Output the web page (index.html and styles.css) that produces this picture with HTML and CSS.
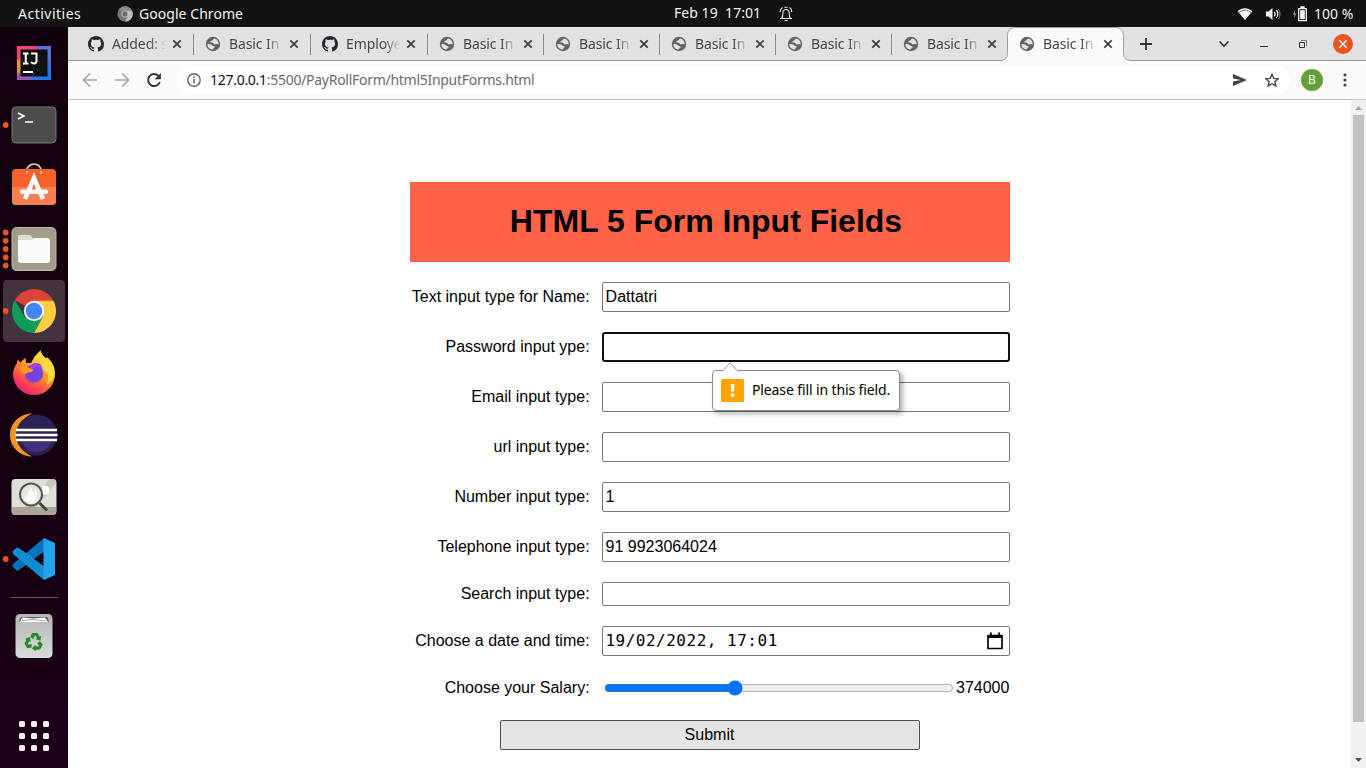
FILE: index.html
```html
<!DOCTYPE html>
<html lang="en">
<head>
<meta charset="utf-8">
<title>Basic Input Forms</title>
<link rel="stylesheet" href="styles.css">
</head>
<body>
<svg class="defs" aria-hidden="true">
  <defs>
    <symbol id="globe" viewBox="0 0 16 16">
      <circle cx="8" cy="8" r="7.2" fill="#5f6368"/>
      <path d="M9.500 2.400c-2 .4-1.300 1.400-2.300 2-1 .5-2 .5-1.800 1.500.2.900 1.600.5 2.600.8 1 .4.600 1.500 1.700 1.700 1.100.1 1.300-.5 2.200-.4.900.1.900.6 1.800.5C13.900 5.800 12.200 3.100 9.500 2.400zM2.300 8.300c1.500-.4 3-.2 4.200.4.900.5.700 1.200 1.600 1.300 1 .1 1.600.4 1.500 1.300-.2 1-1.500.9-1.900 2.300C4.500 13.500 2.500 11.200 2.300 8.300z" fill="#e1e1e1"/>
    </symbol>
    <symbol id="github" viewBox="0 0 16 16">
      <path fill="#24292f" d="M8 0C3.580 0 0 3.580 0 8c0 3.540 2.290 6.530 5.470 7.590.4.070.55-.17.55-.38 0-.19-.01-.82-.01-1.490-2.010.37-2.530-.49-2.690-.94-.09-.23-.48-.94-.82-1.130-.28-.15-.68-.52-.01-.53.630-.01 1.080.58 1.230.82.720 1.210 1.870.87 2.330.66.070-.52.280-.87.510-1.070-1.780-.2-3.640-.89-3.640-3.950 0-.87.310-1.590.820-2.150-.08-.2-.36-1.020.08-2.120 0 0 .67-.21 2.200.820.640-.18 1.320-.27 2-.27s1.360.09 2 .27c1.530-1.040 2.200-.82 2.200-.82.440 1.100.160 1.920.080 2.120.510.560.820 1.270.820 2.150 0 3.070-1.870 3.750-3.650 3.950.290.250.540.730.540 1.480 0 1.070-.01 1.930-.01 2.200 0 .21.150.46.550.38A8.010 8.010 0 0 0 16 8c0-4.420-3.580-8-8-8z"/>
    </symbol>
    <symbol id="close" viewBox="0 0 10 10"><path d="M1.300 1.300l7.400 7.400M8.700 1.300L1.300 8.700" stroke="#3c4043" stroke-width="1.800" fill="none"/></symbol>
  </defs>
</svg>

<header class="topbar">
  <span class="activities">Activities</span>
  <svg class="topchrome" width="16" height="16" viewBox="0 0 16 16"><circle cx="8" cy="8" r="7.600" fill="#777"/><path d="M8 4.500h7A7.600 7.600 0 0 1 8 15.600l3-5.600z" fill="#bdbdbd"/><path d="M1.500 4A7.600 7.600 0 0 1 15 4.500H8z" fill="#8b8b8b"/><circle cx="8" cy="8" r="3.500" fill="#ccc"/><circle cx="8" cy="8" r="2.700" fill="#6d6d6d"/></svg>
  <span class="appname">Google Chrome</span>
  <span class="clock">Feb 19&nbsp; 17:01</span>
  <svg class="bell" width="14" height="16" viewBox="0 0 14 16" fill="none" stroke="#eee" stroke-width="1.100"><path d="M1 12.500h12M2.500 12.500c1-1 1.300-2.500 1.300-5 0-2.600 1.200-4 3.200-4s3.200 1.400 3.200 4c0 2.500.3 4 1.300 5M5.500 14.500h3M5.500 1.200h3M3.500 1.500C2 2.300 1.200 3.800 1.200 6M10.500 1.500c1.500.8 2.300 2.300 2.300 4.500"/></svg>
  <svg class="wifi" width="16" height="14" viewBox="0 0 16 14"><path d="M.6 4.200C4.800.1 11.200.1 15.400 4.200L8 13z" fill="#f4f4f4"/><path d="M1.800 5.600c3.600-3.200 8.800-3.200 12.400 0" stroke="#777" stroke-width="1" fill="none"/></svg>
  <svg class="volume" width="16" height="14" viewBox="0 0 16 14"><path d="M1 4.500h2.500L7.500 1v12L3.500 9.500H1z" fill="#f4f4f4"/><path d="M9.200 4.800c1 1.200 1 3.200 0 4.400M11.300 3c2 2.200 2 5.800 0 8" stroke="#e8e8e8" fill="none" stroke-width="1.300"/><path d="M13.300 2c2.200 2.800 2.200 7.200 0 10" stroke="#888" fill="none"/></svg>
  <svg class="battery" width="15" height="16" viewBox="0 0 15 16"><path d="M3.200 4L.8 8.500h1.700L2 12l2.400-4.500H2.800z" fill="#999"/><path d="M6.700 2.700h7.600v12H6.700zM9 1h3v1.500H9z" fill="none" stroke="#f4f4f4" stroke-width="1.300"/><path d="M8.200 4.200h4.600v9H8.200z" fill="#f4f4f4"/></svg>
  <span class="percent">100 %</span>
</header>

<div class="desktop">
<nav class="dock">
  <svg viewBox="0 0 68 62"><defs><linearGradient id="ij" x1="0" y1="0" x2="1" y2="1"><stop offset="0" stop-color="#ff4078"/><stop offset=".35" stop-color="#f2407e"/><stop offset=".55" stop-color="#5b68cf"/><stop offset="1" stop-color="#087cfa"/></linearGradient></defs><path d="M17 14h34v34H17z" fill="url(#ij)"/><path d="M17 27l4 2v12l-4 3z" fill="#e49436"/><path d="M17 42l7-5 8 11H17z" fill="#9659b7"/><path d="M35 14h16v15l-6-4z" fill="#6171d2"/><path d="M20.500 17.500h27v27h-27z" fill="#111"/><path d="M23 21.500h5.500M25.750 21.500v10M23 31.500h5.500M31 21.500h5.500v7.300q0 2.700-2.500 2.700-1.800 0-3-1.500" fill="none" stroke="#fff" stroke-width="2"/><path d="M23 39h10v2H23z" fill="#fff"/></svg>

  <svg viewBox="0 0 68 62"><circle cx="5.700" cy="31" r="2.900" fill="#e95420"/><rect x="12" y="13" width="44" height="36" rx="4" fill="#4c4c4c" stroke="#777"/><path d="M18 19l6 3-6 3M25 28h8" fill="none" stroke="#fff" stroke-width="1.500"/></svg>

  <svg viewBox="0 0 68 62"><path d="M27 17.500v-3a7 6.500 0 0 1 14 0v3" fill="none" stroke="#f3d3b0" stroke-width="1.600"/><rect x="12" y="13" width="44" height="36" rx="4" fill="#f4622b"/><path d="M12 31h44v14a4 4 0 0 1-4 4H16a4 4 0 0 1-4-4z" fill="#f77f50"/><path d="M27 17.500v-2.500M41 17.500v-2.500" stroke="#f3d3b0" stroke-width="1.600"/><path d="M25 43l9-21 9 21" fill="none" stroke="#fff" stroke-width="4.500"/><rect x="20" y="33.500" width="28" height="4.500" rx="2" fill="#fff"/></svg>

  <svg viewBox="0 0 68 62"><g fill="#e95420"><circle cx="5.700" cy="14.500" r="2.900"/><circle cx="5.700" cy="22.800" r="2.900"/><circle cx="5.700" cy="31" r="2.900"/><circle cx="5.700" cy="39.300" r="2.900"/><circle cx="5.700" cy="47.600" r="2.900"/></g><rect x="12" y="9.500" width="44" height="43" rx="4.500" fill="#a29c8a" stroke="#bcb7a8"/><path d="M18 19q0-2 2-2h9q2 0 3 2l2 3H18z" fill="#dfddd2"/><path d="M18 22h12q3 0 4-2h13q3 0 3 3v19q0 3-3 3H21q-3 0-3-3z" fill="#faf9f8"/></svg>

  <svg viewBox="0 0 68 62"><rect x="3" width="62" height="62" rx="4" fill="#42333f"/><circle cx="5.700" cy="31" r="2.900" fill="#e95420"/><path d="M34 31L14.950 20A22 22 0 0 1 53.050 20z" fill="#db4437"/><path d="M34 20.800h19.500A22 22 0 0 1 34 53l9-17z" fill="#ffcd40"/><path d="M14.950 20A22 22 0 0 0 34 53l9-16.500L24.470 36.500z" fill="#0f9d58"/><circle cx="34" cy="31" r="10.200" fill="#f1f1f1"/><circle cx="34" cy="31" r="8.200" fill="#4285f4"/></svg>

  <svg viewBox="0 0 68 62"><defs><linearGradient id="ff" x1=".8" y1="0" x2=".2" y2="1"><stop offset=".1" stop-color="#fff44f"/><stop offset=".45" stop-color="#ff9422"/><stop offset=".75" stop-color="#ff4350"/><stop offset="1" stop-color="#e31587"/></linearGradient></defs><path d="M34 15.500l6.500-7q1 5 6 8l1-1c5 5 7.500 10 7.500 17a21 20.500 0 0 1-42 0c0-5 2-9 4-11l.5-4 3 3q2-3 5-4.500l.5 5 5 0z" fill="url(#ff)"/><circle cx="34" cy="31.500" r="9.300" fill="#7542e5"/><path d="M29 25q3-4 8-4 6 1 6.500 8-3-4-7-5-2 4-7.500 1z" fill="#a644e6"/><path d="M19 25q6-2 10 1l4.500 1.500q-.5 3-5.500 3-3 2.500-6 .5z" fill="#ff9a22"/><path d="M34 15.500l6.500-7q1 5 6 8l1-1c5 5 7.500 10 7 17-2 7-6 9-8 10 4-9 1-13-4-15-1-7-4-10-8.500-12z" fill="#ffd83d"/></svg>

  <svg viewBox="0 0 68 62"><path d="M32 9.500C20 9.500 10 19 10 31s10 21.500 22 21.500C12 43 12 19 32 9.500z" fill="#f7941e"/><circle cx="36.500" cy="31" r="20.500" fill="#2c2255"/><path d="M22 38h29q-4 10-15 10-10 0-14-10z" fill="#42307d"/><path d="M16 26h41M15.500 31h42M16 36h41" stroke="#fff" stroke-width="2.400"/></svg>

  <svg viewBox="0 0 68 62"><rect x="11.500" y="13" width="45" height="36" rx="4" fill="#dedfd7"/><path d="M12 41h44v4q0 4-4 4H16q-4 0-4-4z" fill="#aaa797"/><path d="M50 13h2q4 0 4 4L36 41H25z" fill="#c5c5b8"/><circle cx="45" cy="24" r="4.500" fill="#fff"/><circle cx="31" cy="28.500" r="11" fill="#e9e9e4" fill-opacity=".85" stroke="#555" stroke-width="2"/><path d="M24 34l7-12 3 6 3-3v9l-6 4z" fill="#fafafa"/><path d="M39.500 37l7.500 7.500" stroke="#444" stroke-width="3"/></svg>

  <svg viewBox="0 0 68 62"><circle cx="5.700" cy="31" r="2.900" fill="#e95420"/><path d="M44 10l1 13-26 19q-2 1-3 0l-3-3q-1-2 0-3z" fill="#0873b9"/><path d="M13 23l3-3q2-1 3 0l26 19-1 13-31-26q-1-2 0-3z" fill="#128bd1"/><path d="M44 10l11 5v32l-11 5q-1-1-.5-2V12z" fill="#24a3ed"/></svg>

  <hr class="dock-line">

  <svg viewBox="0 0 68 62"><defs><linearGradient id="bin" x1="0" y1="0" x2="0" y2="1"><stop offset="0" stop-color="#b5b5b5"/><stop offset="1" stop-color="#dadada"/></linearGradient></defs><rect x="15.500" y="9" width="37" height="44" rx="4.500" fill="url(#bin)"/><path d="M19 17l1.500-5h27l1.500 5z" fill="#666"/><path d="M20 17l2-4.500 11 1 12-1 3 4.500z" fill="#fff"/><path d="M22 15.500l12-1 12 1.500" fill="none" stroke="#aaa"/><g fill="#278a27" transform="translate(0 -1)"><path id="arrow" d="M30.300 33.200L32 29h5.500l2.200 3.500 1.500-.7-.8 5-4.900-1.500 1.500-1-2-3-1.700 3.600z"/><use href="#arrow" transform="rotate(120 34 38)"/><use href="#arrow" transform="rotate(240 34 38)"/></g></svg>

  <svg class="apps" viewBox="0 0 68 62"><g fill="#f2f2f2"><rect x="19" y="16" width="6" height="6" rx="1.500"/><rect x="31" y="16" width="6" height="6" rx="1.500"/><rect x="43" y="16" width="6" height="6" rx="1.500"/><rect x="19" y="28" width="6" height="6" rx="1.500"/><rect x="31" y="28" width="6" height="6" rx="1.500"/><rect x="43" y="28" width="6" height="6" rx="1.500"/><rect x="19" y="40" width="6" height="6" rx="1.500"/><rect x="31" y="40" width="6" height="6" rx="1.500"/><rect x="43" y="40" width="6" height="6" rx="1.500"/></g></svg>
</nav>

<main class="browser">
  <div class="tabstrip">
    <div class="tab wide"><svg class="fav"><use href="#github"/></svg><span class="tabname">Added: s</span><svg class="x"><use href="#close"/></svg></div>
    <div class="tab wide"><svg class="fav"><use href="#globe"/></svg><span class="tabname">Basic In</span><svg class="x"><use href="#close"/></svg></div>
    <div class="tab wide"><svg class="fav"><use href="#github"/></svg><span class="tabname">Employe</span><svg class="x"><use href="#close"/></svg></div>
    <div class="tab"><svg class="fav"><use href="#globe"/></svg><span class="tabname">Basic In</span><svg class="x"><use href="#close"/></svg></div>
    <div class="tab"><svg class="fav"><use href="#globe"/></svg><span class="tabname">Basic In</span><svg class="x"><use href="#close"/></svg></div>
    <div class="tab"><svg class="fav"><use href="#globe"/></svg><span class="tabname">Basic In</span><svg class="x"><use href="#close"/></svg></div>
    <div class="tab"><svg class="fav"><use href="#globe"/></svg><span class="tabname">Basic In</span><svg class="x"><use href="#close"/></svg></div>
    <div class="tab last"><svg class="fav"><use href="#globe"/></svg><span class="tabname">Basic In</span><svg class="x"><use href="#close"/></svg></div>
    <div class="tab active"><svg class="shape" width="132" height="34" viewBox="0 0 132 34"><path d="M0 34v-.5q7.500 0 7.500-7V8.500q0-8 8-8h100q8 0 8 8v18q0 7 7.500 7v.5z" fill="#fafafa"/><path d="M0 33.500q7.500 0 7.500-7V8.500q0-8 8-8h100q8 0 8 8v18q0 7 7.500 7" fill="none" stroke="#a0a0a0"/></svg><svg class="fav"><use href="#globe"/></svg><span class="tabname">Basic In</span><svg class="x"><use href="#close"/></svg></div>
    <svg class="plus" width="12" height="12" viewBox="0 0 12 12"><path d="M6 0v12M0 6h12" stroke="#333" stroke-width="1.800"/></svg>
    <div class="winbtns">
      <svg width="12" height="8" viewBox="0 0 12 8"><path d="M1.500 1.500L6 6l4.500-4.500" fill="none" stroke="#333" stroke-width="1.700"/></svg>
      <svg width="8" height="8" viewBox="0 0 8 8"><path d="M0 6.500h8" stroke="#333"/></svg>
      <svg width="8" height="8" viewBox="0 0 8 8"><path d="M.5 2.500h5v5h-5z" fill="none" stroke="#333"/><path d="M2 .5h5.500V6" fill="none" stroke="#777"/></svg>
      <svg width="20" height="20" viewBox="0 0 20 20"><circle cx="10" cy="10" r="10" fill="#e95420"/><path d="M6.300 6.300l7.400 7.400M13.700 6.300l-7.400 7.400" stroke="#fff" stroke-width="1.400"/></svg>
    </div>
  </div>

  <div class="toolbar">
    <svg class="nav" width="16" height="16" viewBox="0 0 16 16" fill="none" stroke="#a8a8a8" stroke-width="1.700"><path d="M15 8H2M8 1.500L1.500 8 8 14.500"/></svg>
    <svg class="nav" width="16" height="16" viewBox="0 0 16 16" fill="none" stroke="#a8a8a8" stroke-width="1.700"><path d="M1 8h13M8 1.500L14.500 8 8 14.500"/></svg>
    <svg class="nav" width="16" height="16" viewBox="0 0 16 16"><path d="M13.800 10A6 6 0 1 1 12.500 3.900" fill="none" stroke="#333" stroke-width="1.900"/><path d="M14.900 1v6.300H8.600z" fill="#333"/></svg>
    <div class="address">
      <svg width="14" height="14" viewBox="0 0 14 14"><circle cx="7" cy="7" r="6.200" fill="none" stroke="#5f6368" stroke-width="1.400"/><path d="M7 6v4.500M7 3.300v1.600" stroke="#5f6368" stroke-width="1.500"/></svg>
      <span class="url"><b>127.0.0.1</b>:5500/PayRollForm/html5InputForms.html</span>
      <svg class="send" width="14" height="12" viewBox="0 0 14 12"><path d="M0 0l14 6L0 12V7.500L8 6 0 4.500z" fill="#444"/></svg>
      <svg class="star" width="14" height="14" viewBox="0 0 24 24"><path d="M12 2l3 7.200 7.700.6-5.900 5 1.800 7.600L12 18.300l-6.600 4.100 1.800-7.600-5.900-5L9 9.200z" fill="none" stroke="#444" stroke-width="2.300"/></svg>
    </div>
    <span class="avatar">B</span>
    <svg class="more" width="4" height="14" viewBox="0 0 4 14" fill="#444"><circle cx="2" cy="2" r="1.600"/><circle cx="2" cy="7" r="1.600"/><circle cx="2" cy="12" r="1.600"/></svg>
  </div>

  <div class="viewport">
    <form class="form">
      <h1>HTML 5 Form Input Fields</h1>
      <div class="row"><label for="name">Text input type for Name:</label><input id="name" class="field" type="text" value="Dattatri"></div>
      <div class="row"><label for="pwd">Password input ype:</label><input id="pwd" class="field focused" type="password">
        <div class="bubble"><svg class="tip" width="18" height="10" viewBox="0 0 18 10"><path d="M0 10L9 1l9 9z" fill="#fff"/><path d="M1 9.500L9 1l8 8.500" fill="none" stroke="#999"/></svg><svg width="23" height="23" viewBox="0 0 23 23"><rect width="23" height="23" rx="1.500" fill="#ffa400"/><path d="M9.700 5h3.800l-.4 7.500h-3zM9.800 14.500h3.600v3.300H9.800z" fill="#fff"/></svg><span>Please fill in this field.</span></div>
      </div>
      <div class="row"><label for="email">Email input type:</label><input id="email" class="field" type="email"></div>
      <div class="row"><label for="url">url input type:</label><input id="url" class="field" type="url"></div>
      <div class="row"><label for="num">Number input type:</label><input id="num" class="field" type="text" value="1"></div>
      <div class="row"><label for="tel">Telephone input type:</label><input id="tel" class="field" type="tel" value="91 9923064024"></div>
      <div class="row short"><label for="search">Search input type:</label><input id="search" class="field" type="text"></div>
      <div class="row"><label for="date">Choose a date and time:</label><div id="date" class="field date"><span>19/02/2022, 17:01</span><svg width="16" height="18" viewBox="0 0 16 18"><path d="M1 3.500h14v13H1z" fill="none" stroke="#000" stroke-width="1.700" stroke-linejoin="round"/><path d="M1 3h14v3H1zM3 .5h1.800V3H3zM11.200.5H13V3h-1.800z"/></svg></div></div>
      <div class="row salary"><label for="pay">Choose your Salary:</label><input id="pay" class="range" type="range" min="0" max="1000" value="367"><output>374000</output></div>
      <button class="submit" type="button">Submit</button>
    </form>
    <div class="scrollbar">
      <svg width="7" height="4" viewBox="0 0 7 4"><path d="M0 4L3.500 0 7 4z" fill="#a3a3a3"/></svg>
      <div class="thumb"></div>
      <svg width="7" height="4" viewBox="0 0 7 4"><path d="M0 0l3.500 4L7 0z" fill="#505050"/></svg>
    </div>
  </div>
</main>
</div>
</body>
</html>
```
FILE: styles.css
```css
* { box-sizing: border-box; }
body { margin: 0; width: 1366px; height: 768px; overflow: hidden; background: #fff; font-family: "Noto Sans", sans-serif; font-size: 14px; }
svg { display: block; flex: none; }
.defs { position: absolute; width: 0; height: 0; }

.topbar { display: flex; align-items: center; height: 27px; background: #131313; color: #f2f2f2; white-space: nowrap; line-height: 27px; }
.activities { margin-left: 18px; width: 99px; letter-spacing: .5px; }
.appname { margin-left: 6px; width: 535px; letter-spacing: .05px; }
.clock { width: 104px; padding-bottom: 2px; letter-spacing: .05px; }
.bell { margin-left: 1px; }
.wifi { margin-left: 444px; }
.volume { margin-left: 12px; }
.battery { margin-left: 11px; }
.percent { margin-left: 7px; }

.desktop { display: flex; height: 741px; }
.dock { display: flex; flex-direction: column; flex: none; width: 68px; padding: 5px 0 1px; background: linear-gradient(#13000e, #14000f 60%, #1d0019); }
.dock > svg { width: 68px; height: 62px; }
.dock-line { width: 48px; height: 1px; margin: 7px auto; border: 0; background: #66596a; }
.dock .apps { margin-top: auto; }

.browser { display: flex; flex-direction: column; flex: 1; min-width: 0; }
.tabstrip { display: flex; align-items: center; height: 34px; padding-left: 9px; background: #e1e1e1; border-bottom: 1px solid #a0a0a0; }
.tab { position: relative; display: flex; align-items: center; flex: none; width: 116px; height: 33px; padding-left: 11px; color: #45484b; }
.tab.wide { width: 117px; }
.tab::after { content: ""; position: absolute; right: 0; top: 7px; width: 1px; height: 21px; background: #8a8a8a; }
.tab.last::after, .tab.active::after { display: none; }
.fav { position: relative; width: 16px; height: 16px; }
.tabname { position: relative; width: 57px; margin-left: 8px; white-space: nowrap; letter-spacing: -.1px; -webkit-mask-image: linear-gradient(90deg, #000 38px, transparent 54px); mask-image: linear-gradient(90deg, #000 38px, transparent 54px); }
.x { position: relative; width: 10px; height: 10px; margin-left: 3px; }
.shape { position: absolute; left: -8px; top: 0; }
.plus { margin-left: 16px; }
.winbtns { display: flex; align-items: center; gap: 31px; margin-left: auto; padding-right: 13px; }
.winbtns svg:first-child { margin-right: -1px; }
.winbtns svg:nth-child(3) { margin-right: -5px; }

.toolbar { display: flex; align-items: center; height: 39px; padding-left: 14px; background: #fafafa; border-bottom: 1px solid #c4c4c4; }
.nav { margin-right: 16px; }
.address { display: flex; align-items: center; flex: none; width: 1114px; height: 30px; margin-left: -2px; padding-left: 11px; border-radius: 15px; background: #fff; }
.url { margin-left: 9px; padding-bottom: 2px; color: #6b6b6b; letter-spacing: -.28px; }
.url b { font-weight: 400; color: #111; }
.send { margin-left: auto; }
.star { margin: 0 11px 0 18px; }
.avatar { width: 22px; height: 22px; margin-left: 11px; border-radius: 50%; background: #689f38; color: #fff; font-size: 12px; line-height: 22px; text-align: center; }
.more { margin-left: 19.500px; }

.viewport { display: flex; justify-content: space-between; flex: 1; background: #fff; }
.form { width: 600px; margin: 82px 0 0 342px; font: 16px "Liberation Sans", Arial, sans-serif; color: #000; }
.form h1 { height: 80px; margin: 0 0 20px; padding-right: 8px; background: #ff6347; font-size: 32px; line-height: 78px; text-align: center; }
.row { position: relative; display: flex; align-items: center; height: 30px; margin-bottom: 20px; }
.row label { width: 179.600px; margin-right: 12.400px; text-align: right; white-space: nowrap; }
.field { width: 408px; height: 30px; margin: 0; padding: 1px 2.600px; border: 1px solid #767676; border-radius: 2px; outline: 0; background: #fff; font: 16px "Liberation Sans", Arial, sans-serif; color: #000; }
.focused { border: 2px solid #101010; border-radius: 3px; }
.short, .short .field { height: 24px; }
.date { display: flex; align-items: center; justify-content: space-between; padding: 0 6px 0 2.400px; font-family: "DejaVu Sans Mono", monospace; letter-spacing: .51px; }
.date span { padding-bottom: 2px; }
.salary { height: 24px; margin-bottom: 20px; }
.range { width: 350px; height: 16px; margin: 0 2px; accent-color: #0075ff; }
.submit { display: block; width: 420px; height: 30px; margin: 0 auto; padding: 0 1px 0 0; border: 1px solid #505050; border-radius: 2px; background: #e4e4e4; font: 16px "Liberation Sans", Arial, sans-serif; color: #000; }

.bubble { position: absolute; z-index: 2; left: 302px; top: 38px; display: flex; align-items: center; width: 188px; height: 41px; padding-left: 8px; border: 1px solid #8c8c8c; border-radius: 4px; background: #fff; box-shadow: 3px 3px 5px rgba(0, 0, 0, .3); font: 14px "Noto Sans", sans-serif; letter-spacing: -.12px; white-space: nowrap; }
.bubble span { margin-left: 8px; padding-bottom: 2px; }
.tip { position: absolute; left: 8px; top: -9px; }

.scrollbar { display: flex; flex-direction: column; align-items: center; width: 15px; padding: 6px 0; background: #f1f1f1; }
.thumb { width: 11px; height: 607px; margin: 5px 0 auto; background: #c1c1c1; }
```
